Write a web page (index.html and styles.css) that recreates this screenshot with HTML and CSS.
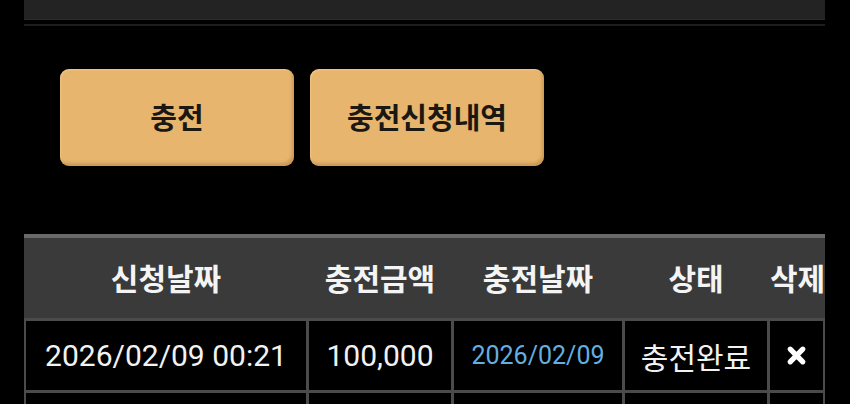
FILE: index.html
```html
<!DOCTYPE html>
<html lang="ko">
<head>
<meta charset="utf-8">
<title>충전</title>
<link rel="stylesheet" href="styles.css">
</head>
<body>
  <div class="topbar"></div>
  <div class="divider"></div>

  <div class="actions">
    <button class="btn">충전</button>
    <button class="btn">충전신청내역</button>
  </div>

  <div class="list">
    <div class="thead">
      <div class="th">신청날짜</div>
      <div class="th">충전금액</div>
      <div class="th">충전날짜</div>
      <div class="th">상태</div>
      <div class="th th-last">삭제</div>
    </div>
    <div class="tbody">
      <div class="tr">
        <div class="td">2026/02/09 00:21</div>
        <div class="td">100,000</div>
        <div class="td td-date">2026/02/09</div>
        <div class="td td-status">충전완료</div>
        <div class="td">
          <svg class="del" viewBox="0 0 20 20" width="21" height="21" aria-label="삭제">
            <path d="M4 4 L16 16 M16 4 L4 16" stroke="#fff" stroke-width="5" stroke-linecap="round"/>
          </svg>
        </div>
      </div>
      <div class="tr">
        <div class="td"></div>
        <div class="td"></div>
        <div class="td"></div>
        <div class="td"></div>
        <div class="td"></div>
      </div>
    </div>
  </div>
</body>
</html>
```
FILE: styles.css
```css
html, body {
  margin: 0;
  padding: 0;
  background: #000;
  font-family: Roboto, "Noto Sans CJK KR", sans-serif;
  color: #fff;
  overflow: hidden;
}

.topbar {
  margin: 0 25px 0 24px;
  height: 19px;
  background: #232323;
  border-bottom: 1px solid #2c2c2c;
}

.divider {
  margin: 4px 25px 0 24px;
  height: 2px;
  background: #1d1d1d;
}

.actions {
  display: flex;
  gap: 16px;
  padding: 43px 0 0 60px;
}

.btn {
  width: 234px;
  height: 97px;
  border: none;
  border-radius: 9px;
  background: #e7b56d;
  box-shadow: inset -2px -3px 3px rgba(120, 70, 20, 0.25), inset 1px 1px 2px rgba(255, 230, 180, 0.4);
  font-family: "Noto Sans CJK KR", sans-serif;
  font-weight: 700;
  font-size: 29px;
  color: #1b1712;
  padding: 0 0 4px;
}

.list {
  margin: 68px 25px 0 24px;
  overflow: hidden;
}

.thead,
.tr {
  display: grid;
  grid-template-columns: 280px 142px 168px 142px 53px;
  column-gap: 3px;
  padding: 0 2px;
}

.thead {
  height: 80px;
  background: #3a3a3a;
  border-top: 4px solid #696969;
  align-items: center;
}

.th {
  text-align: center;
  font-family: "Noto Sans CJK KR", sans-serif;
  font-weight: 700;
  font-size: 30px;
  color: #f4f4f4;
  white-space: nowrap;
  padding-bottom: 3px;
}

.th-last {
  text-align: right;
  margin-right: -2px;
}

.tbody {
  background: #4b4b4b;
  padding-top: 3px;
}

.tr {
  margin-bottom: 3px;
}

.td {
  background: #000;
  height: 69px;
  display: flex;
  align-items: center;
  justify-content: center;
  font-size: 30px;
  color: #f2f2f2;
  white-space: nowrap;
}

.td-date {
  font-size: 25px;
  color: #64aee0;
}

.td-status {
  font-family: "Noto Sans CJK KR", sans-serif;
  font-size: 30px;
}

.del {
  display: block;
}
```
